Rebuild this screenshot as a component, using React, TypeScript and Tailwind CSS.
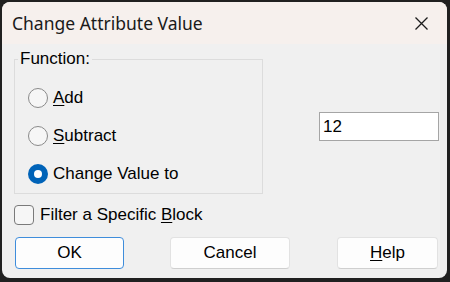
import React from "react";

const Radio = ({ checked, children }: { checked?: boolean; children: React.ReactNode }) => (
  <div className="flex items-center h-[38px]">
    {checked ? (
      <span className="w-[20px] h-[20px] rounded-full bg-[#0063b8] flex items-center justify-center">
        <span className="w-[8px] h-[8px] rounded-full bg-white" />
      </span>
    ) : (
      <span className="w-[20px] h-[20px] rounded-full border border-[#8a8a8a] bg-[#f6f6f6]" />
    )}
    <span className="ml-[5px]">{children}</span>
  </div>
);

const Button = ({ className, children }: { className: string; children: React.ReactNode }) => (
  <button className={"h-[32px] rounded-[4px] bg-[#fdfdfd] text-black " + className}>{children}</button>
);

export default function App() {
  return (
    <div className="w-[450px] h-[282px] bg-[#202020] pt-[2px] pl-[2px]">
      <div
        className="w-[445px] h-[276px] rounded-[8px] overflow-hidden bg-[#f0f0f0] flex flex-col text-black text-[17px]"
        style={{ fontFamily: '"Liberation Sans", Arial, sans-serif' }}
      >
        {/* title bar */}
        <div className="h-[42px] bg-[#f6f0ed] flex items-center justify-between pl-[10px] pr-[19px] shrink-0">
          <span className="text-[17.5px] text-[#1a1a1a]" style={{ fontFamily: '"Noto Sans", sans-serif' }}>
            Change Attribute Value
          </span>
          <svg width="13" height="13" viewBox="0 0 13 13" className="mt-[1px]">
            <path d="M0.5 0.5 L12.5 12.5 M12.5 0.5 L0.5 12.5" stroke="#1c1c1c" strokeWidth="1.3" />
          </svg>
        </div>

        {/* body */}
        <div className="flex flex-col">
          <div className="flex">
            <fieldset className="ml-[12px] mt-[6px] w-[249px] border border-[#dcdcdc] leading-[18px]">
              <legend className="ml-[3px] px-[2px] leading-[18px]">Function:</legend>
              <div className="pt-[11px] pl-[13px] flex flex-col">
                <Radio>
                  <span className="underline underline-offset-2">A</span>dd
                </Radio>
                <Radio>
                  <span className="underline underline-offset-2">S</span>ubtract
                </Radio>
                <Radio checked>Change Value to</Radio>
              </div>
            </fieldset>
            <div className="ml-[56px] mt-[68px] w-[120px] h-[29px] bg-white border border-[#a5a5a5] flex items-center pl-[3px]">
              12
            </div>
          </div>

          <div className="flex items-center ml-[12px] mt-[11px] h-[20px]">
            <span className="w-[20px] h-[20px] rounded-[4px] border border-[#7a7a7a] bg-[#f6f6f6]" />
            <span className="ml-[6px]">
              Filter a Specific <span className="underline underline-offset-2">B</span>lock
            </span>
          </div>

          <div className="flex mt-[12px]">
            <Button className="ml-[13px] w-[109px] border border-[#3f8ddb]">OK</Button>
            <Button className="ml-[46px] w-[120px] border border-[#e2e2e2] border-b-[#cfcfcf]">Cancel</Button>
            <Button className="ml-[47px] w-[101px] border border-[#e2e2e2] border-b-[#cfcfcf]">
              <span className="underline underline-offset-2">H</span>elp
            </Button>
          </div>
        </div>
      </div>
    </div>
  );
}
